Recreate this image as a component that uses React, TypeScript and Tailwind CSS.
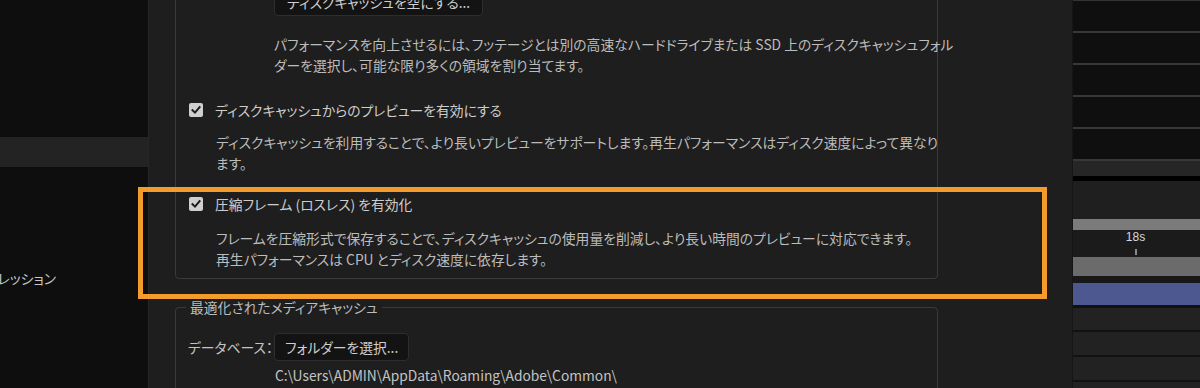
import React from "react";

const font = "font-['Noto_Sans_CJK_JP','Noto_Sans',sans-serif] [font-feature-settings:'palt']";

function CheckBox() {
  return (
    <div className="w-[14px] h-[14px] rounded-[2px] bg-[#cfcfcf] flex items-center justify-center shrink-0">
      <svg width="10" height="10" viewBox="0 0 10 10">
        <polyline points="1.5,5.2 4,7.6 8.6,2.2" fill="none" stroke="#1b1b1b" strokeWidth="2" strokeLinecap="square" />
      </svg>
    </div>
  );
}

function RightPanel() {
  const rows = [0, 1, 2, 3, 4];
  return (
    <div className="w-[128px] h-full flex flex-col bg-[#0f0f0f] border-l border-[#161616] overflow-hidden">
      <div className="h-[1px] bg-[#333]" />
      {rows.map((r) => (
        <div key={r} className="flex flex-col">
          <div className="h-[30px] bg-[#0f0f0f]" />
          <div className="h-[2px] bg-[#383838]" />
        </div>
      ))}
      <div className="h-[15px] bg-[#262626]" />
      <div className="h-[5px] bg-[#000]" />
      <div className="h-[38px] bg-[#1f1f1f]" />
      <div className="h-[11px] bg-[#7b7b7b]" />
      <div className="h-[27px] bg-[#1b1b1b] flex flex-col items-center pr-[2px]">
        <div className="text-[12px] leading-[14px] text-[#d8d8d8] font-['Liberation_Sans',sans-serif]">18s</div>
        <div className="w-[2px] h-[6px] bg-[#8a8a8a] mt-[5px]" />
      </div>
      <div className="h-[19px] bg-[#6b6b6b]" />
      <div className="h-[7px] bg-[#181818]" />
      <div className="h-[22px] bg-[#4e5890]" />
      <div className="h-[3px] bg-[#111]" />
      <div className="h-[22px] bg-[#222]" />
      <div className="h-[2px] bg-[#111]" />
      <div className="h-[23px] bg-[#222]" />
      <div className="h-[2px] bg-[#111]" />
      <div className="h-[23px] bg-[#222]" />
      <div className="h-[2px] bg-[#111]" />
      <div className="flex-1 bg-[#222]" />
    </div>
  );
}

export default function App() {
  return (
    <div className={`relative w-[1200px] h-[388px] overflow-hidden flex bg-[#1e1e1e] text-[13.8px] ${font}`}>
      {/* Sidebar */}
      <div className="w-[149px] h-full bg-[#0e0e0e] border-r border-[#262626] flex flex-col shrink-0">
        <div className="h-[137px]" />
        <div className="h-[30px] bg-[#232323]" />
        <div className="mt-[101px] w-[56px] overflow-hidden flex justify-end whitespace-nowrap leading-[20px] text-[#c8c8c8]">
          <span>スクリプトとエクスプレッション</span>
        </div>
      </div>

      {/* Dialog body */}
      <div className="w-[923px] h-full flex flex-col pl-[26px] shrink-0">
        <div className="w-[763px] -mt-[30px] border border-[#3a3a3a] rounded-[4px] pt-[17px] pb-[8px]">
          <div className="pl-[98px]">
            <div className="h-[28px] inline-flex items-center px-[12px] bg-[#131313] border border-[#2e2e2e] rounded-[4px] text-[#cfcfcf]">
              ディスクキャッシュを空にする...
            </div>
            <div className="mt-[18px] leading-[21px] text-[#bcbcbc] whitespace-nowrap">
              <div>パフォーマンスを向上させるには、フッテージとは別の高速なハードドライブまたは SSD 上のディスクキャッシュフォル</div>
              <div>ダーを選択し、可能な限り多くの領域を割り当てます。</div>
            </div>
          </div>
          <div className="mt-[24px] pl-[13px] h-[20px] flex items-center gap-[12px] text-[#cdcdcd]">
            <CheckBox />
            <span>ディスクキャッシュからのプレビューを有効にする</span>
          </div>
          <div className="mt-[12px] pl-[40px] leading-[21px] text-[#bcbcbc] whitespace-nowrap">
            <div>ディスクキャッシュを利用することで、より長いプレビューをサポートします。再生パフォーマンスはディスク速度によって異なり</div>
            <div>ます。</div>
          </div>
          <div className="mt-[20px] pl-[13px] h-[20px] flex items-center gap-[12px] text-[#cdcdcd]">
            <CheckBox />
            <span>圧縮フレーム (ロスレス) を有効化</span>
          </div>
          <div className="mt-[14px] pl-[40px] leading-[21px] text-[#bcbcbc] whitespace-nowrap">
            <div>フレームを圧縮形式で保存することで、ディスクキャッシュの使用量を削減し、より長い時間のプレビューに対応できます。</div>
            <div>再生パフォーマンスは CPU とディスク速度に依存します。</div>
          </div>
        </div>

        <fieldset className="w-[763px] mt-[18px] border border-[#3a3a3a] rounded-[4px] pb-[20px]">
          <legend className="ml-[10px] px-[4px] leading-[20px] text-[#bcbcbc]">最適化されたメディアキャッシュ</legend>
          <div className="mt-[16px] pl-[12px] flex items-center">
            <span className="w-[86px] text-[#c4c4c4]">データベース：</span>
            <div className="h-[28px] inline-flex items-center px-[10px] bg-[#131313] border border-[#2e2e2e] rounded-[4px] text-[#cfcfcf]">
              フォルダーを選択...
            </div>
          </div>
          <div className="mt-[4px] pl-[99px] leading-[20px] text-[#c4c4c4]">
            C:\Users\ADMIN\AppData\Roaming\Adobe\Common\
          </div>
        </fieldset>
      </div>

      <RightPanel />

      {/* Orange highlight annotation */}
      <div className="absolute left-[138px] top-[187px] w-[909px] h-[112px] border-[5px] border-[#f39c2c] pointer-events-none" />
    </div>
  );
}
